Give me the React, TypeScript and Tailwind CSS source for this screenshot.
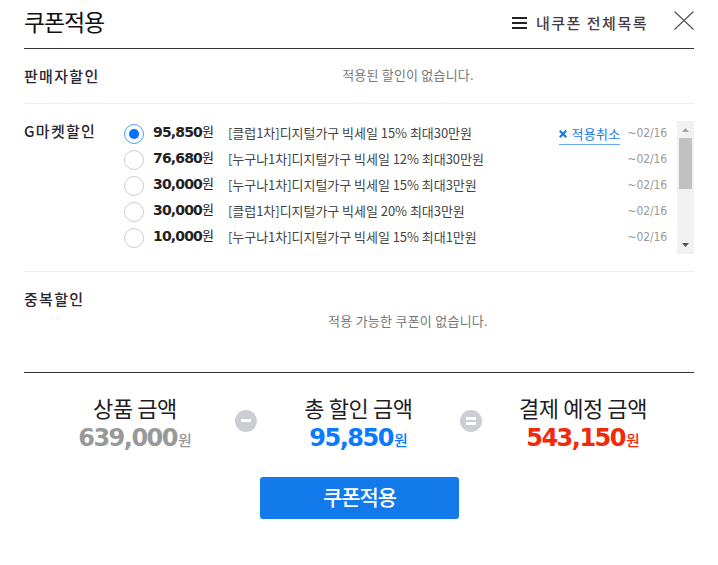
import clsx from "clsx";

const coupons = [
    { amount: "95,850", name: "[클럽1차]디지털가구 빅세일 15% 최대30만원" },
    { amount: "76,680", name: "[누구나1차]디지털가구 빅세일 12% 최대30만원" },
    { amount: "30,000", name: "[누구나1차]디지털가구 빅세일 15% 최대3만원" },
    { amount: "30,000", name: "[클럽1차]디지털가구 빅세일 20% 최대3만원" },
    { amount: "10,000", name: "[누구나1차]디지털가구 빅세일 15% 최대1만원" },
];

const Radio = ({ checked }: { checked: boolean }) => (
    <span
        className={clsx(
            "mt-[3px] flex size-5 shrink-0 items-center justify-center rounded-full border",
            checked ? "border-[#4c9bff]" : "border-[#cdcdcd]"
        )}
    >
        {checked && <span className="size-[10px] rounded-full bg-[#0070ff]" />}
    </span>
);

const SectionTitle = ({ children }: { children: string }) => (
    <h2 className="w-[100px] shrink-0 text-[15px] font-medium leading-5 tracking-[1.3px] text-[#2b2530]">
        {children}
    </h2>
);

const ScrollBar = () => (
    <div className="flex h-[133px] w-[17px] flex-col items-center bg-[#f1f1f1]">
        <svg className="h-[17px] w-[17px] shrink-0" viewBox="0 0 17 17">
            <path d="M5 11 8.5 7 12 11z" fill="#a3a3a3" />
        </svg>
        <div className="h-[51px] w-[13px] bg-[#c1c1c1]" />
        <svg className="mt-auto h-[17px] w-[17px] shrink-0" viewBox="0 0 17 17">
            <path d="M5 6 8.5 10 12 6z" fill="#505050" />
        </svg>
    </div>
);

const CouponRow = ({ amount, name, checked }: { amount: string; name: string; checked: boolean }) => (
    <li className="flex h-[26px] items-start">
        <Radio checked={checked} />
        <p className="ml-[9px] flex w-[75px] items-start whitespace-nowrap text-[#222]">
            <strong className="font-['DejaVu_Sans'] text-[14px] font-bold leading-[23px] tracking-[-0.85px]">
                {amount}
            </strong>
            <span className="text-[13px] leading-[20px]">원</span>
        </p>
        <p className="mt-px whitespace-nowrap text-[13px] leading-[21px] tracking-[-0.04px] text-[#444]">{name}</p>
        <div className="ml-auto flex items-start">
            {checked && (
                <button className="mt-[3px] flex h-[21px] items-center whitespace-nowrap border-b border-[#6aa5f2] text-[13px] tracking-[0.3px] text-[#1479ea]">
                    <svg className="mr-1 size-2" viewBox="0 0 8 8">
                        <path d="M.8.8l6.4 6.4M7.2.8.8 7.2" stroke="currentColor" strokeWidth="2.2" />
                    </svg>
                    적용취소
                </button>
            )}
            <span className="ml-[7px] mt-px font-['DejaVu_Sans_Condensed','DejaVu_Sans'] text-[12px] leading-[22px] tracking-[-0.1px] text-[#999] [font-stretch:condensed]">
                ~02/16
            </span>
        </div>
    </li>
);

const Total = ({ label, amount, className }: { label: string; amount: string; className: string }) => (
    <div className={clsx("text-center", className)}>
        <p className="text-[22px] leading-6 tracking-[-0.4px] text-[#221c24]">{label}</p>
        <p className="mt-1 h-[30px] leading-[30px]">
            <strong className="font-['DejaVu_Sans'] text-[24px] font-bold tracking-[-1.5px]">{amount}</strong>
            <span className="ml-px text-[15px] font-medium">원</span>
        </p>
    </div>
);

const Operator = ({ equal = false }: { equal?: boolean }) => (
    <svg className="mt-[15px] size-[22px]" viewBox="0 0 22 22">
        <circle cx="11" cy="11" r="11" fill="#cdced5" />
        {equal ? (
            <path d="M6 7h10v3H6zM6 12h10v3H6z" fill="#fff" />
        ) : (
            <path d="M6 9h10v3H6z" fill="#fff" />
        )}
    </svg>
);

const App = () => {
    return (
        <main className="h-[565px] w-[718px] overflow-hidden bg-white px-6 font-['Noto_Sans_CJK_KR',sans-serif]">
            <div className="w-[670px]">
                <header className="flex h-[49px] items-start border-b border-[#333]">
                    <h1 className="mt-1 text-[23px] leading-[34px] tracking-[-1.2px] text-[#111]">쿠폰적용</h1>
                    <button className="ml-auto mt-[13px] flex items-center text-[15px] font-medium leading-5 tracking-[1.5px] text-[#443d46]">
                        <svg className="mr-[9px] h-3 w-[15px]" viewBox="0 0 15 12">
                            <path d="M0 0h15v2H0zM0 5h15v2H0zM0 10h15v2H0z" fill="#222" />
                        </svg>
                        내쿠폰 전체목록
                    </button>
                    <button className="ml-[26px] mt-[11px]" aria-label="닫기">
                        <svg className="h-[19px] w-5" viewBox="0 0 20 19">
                            <path d="M.5.5l19 18M19.5.5l-19 18" stroke="#555" strokeWidth="1.2" />
                        </svg>
                    </button>
                </header>

                <section className="flex h-[55px] border-b border-[#eee] pt-[17px]">
                    <SectionTitle>판매자할인</SectionTitle>
                    <p className="flex-1 pr-[2px] text-center text-[13px] leading-[18px] tracking-[0.2px] text-[#777]">
                        적용된 할인이 없습니다.
                    </p>
                </section>

                <section className="flex h-[168px] border-b border-[#eee] pt-[17px]">
                    <SectionTitle>G마켓할인</SectionTitle>
                    <ul className="h-[133px] w-[543px] overflow-hidden">
                        {coupons.map((coupon, index) => (
                            <CouponRow key={index} {...coupon} checked={index === 0} />
                        ))}
                    </ul>
                    <div className="ml-auto">
                        <ScrollBar />
                    </div>
                </section>

                <section className="flex h-[101px] border-b border-[#333] pt-[17px]">
                    <SectionTitle>중복할인</SectionTitle>
                    <p className="mt-[22px] flex-1 pr-[2px] text-center text-[13px] leading-5 tracking-[0.25px] text-[#777]">
                        적용 가능한 쿠폰이 없습니다.
                    </p>
                </section>

                <div className="grid grid-cols-[211px_22px_203px_22px_202px] pt-[22px]">
                    <Total label="상품 금액" amount="639,000" className="pl-[11px] text-[#999]" />
                    <Operator />
                    <Total label="총 할인 금액" amount="95,850" className="text-[#0a7aff]" />
                    <Operator equal />
                    <Total label="결제 예정 금액" amount="543,150" className="text-[#f02a0a]" />
                </div>

                <button className="ml-[236px] mt-6 flex h-[42px] w-[199px] justify-center rounded-[3px] bg-[#127aeb] text-[21px] font-medium leading-[38px] tracking-[-1.1px] text-white">
                    쿠폰적용
                </button>
            </div>
        </main>
    );
};

export default App;
